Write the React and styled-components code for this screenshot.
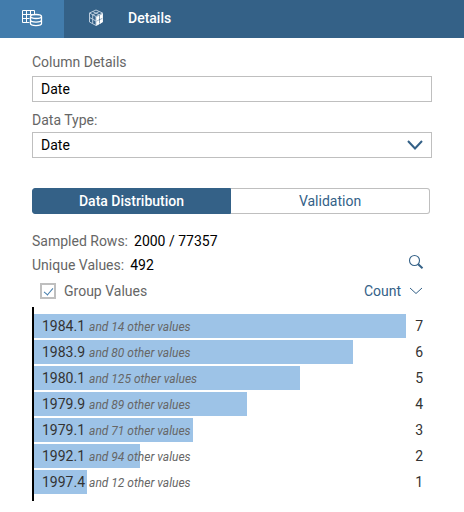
import React, { useState } from "react";
import styled, { createGlobalStyle } from "styled-components";

const GlobalStyle = createGlobalStyle`
  * { box-sizing: border-box; }
  body { margin: 0; background: #fff; }
  body, button, input, select {
    font-family: Roboto, "Liberation Sans", sans-serif;
    font-size: 14px;
    line-height: 24px;
  }
`;

const Header = styled.header`
  display: flex;
  align-items: center;
  height: 38px;
  background: #346187;
  color: #fff;
`;

const HeaderTab = styled.button`
  display: flex;
  align-items: center;
  justify-content: center;
  width: 64px;
  height: 38px;
  padding: 0 0 2px;
  border: 0;
  color: #fff;
  background: ${(p) => (p.$active ? "#427cac" : "transparent")};
`;

const Title = styled.h1`
  margin: 0;
  padding-bottom: 2px;
  font-size: 14px;
  font-weight: 500;
`;

const Main = styled.main`
  display: flex;
  flex-direction: column;
  padding: 12px 32px;
`;

const Field = styled.div`
  display: flex;
  flex-direction: column;
  gap: ${(p) => (p.$tight ? 0 : 2)}px;
  margin-bottom: ${(p) => (p.$tight ? 30 : 6)}px;
`;

const FieldLabel = styled.label`
  color: #666;
`;

const FieldInput = styled.input`
  width: 100%;
  height: 26px;
  padding: 0 8px;
  border: 1px solid #bfbfbf;
  border-radius: 0;
  color: #000;
  background: #fff;
`;

const SelectBox = styled.div`
  display: grid;
  align-items: center;
  & > * { grid-area: 1 / 1; }
  & > svg { justify-self: end; margin-right: ${(p) => p.$inset}px; pointer-events: none; }
`;

const FieldSelect = styled.select`
  appearance: none;
  width: 100%;
  height: 26px;
  padding: 0 32px 0 8px;
  border: 1px solid #bfbfbf;
  border-radius: 0;
  color: #000;
  background: #fff;
`;

const Segments = styled.div`
  display: grid;
  grid-template-columns: 1fr 1fr;
  margin: 0 2px 15px 0;
`;

const Segment = styled.button`
  height: 26px;
  padding: 0;
  border: 1px solid ${(p) => (p.$active ? "#346187" : "#bfbfbf")};
  color: ${(p) => (p.$active ? "#fff" : "#346187")};
  background: ${(p) => (p.$active ? "#346187" : "#fff")};
  font-weight: ${(p) => (p.$active ? 500 : 400)};
  &:first-child { border-radius: 3px 0 0 3px; }
  &:last-child { border-radius: 0 3px 3px 0; border-left: 0; }
`;

const StatRow = styled.div`
  display: flex;
  align-items: center;
  gap: 6px;
  height: 24px;
  color: #666;
`;

const StatValue = styled.span`
  color: #000;
`;

const SearchButton = styled.button`
  display: flex;
  margin-left: auto;
  padding: 0 8px 6px;
  border: 0;
  background: none;
  color: #346187;
`;

const GroupRow = styled.div`
  display: flex;
  align-items: center;
  justify-content: space-between;
  height: 28px;
  padding: 0 9px 0 8px;
`;

const CheckLabel = styled.label`
  display: flex;
  align-items: center;
  gap: 8px;
  color: #666;
`;

const Checkbox = styled.input`
  appearance: none;
  display: grid;
  place-items: center;
  width: 16px;
  height: 16px;
  margin: 0;
  border: 2px solid #bfbfbf;
  background: #fff;
  &:checked::after {
    content: "";
    width: 4px;
    height: 8px;
    margin-bottom: 2px;
    border: solid #427cac;
    border-width: 0 1px 1px 0;
    transform: rotate(40deg);
  }
`;

const MeasureSelect = styled.select`
  appearance: none;
  padding: 0 21px 0 0;
  border: 0;
  background: none;
  color: #346187;
`;

const Chart = styled.ul`
  display: flex;
  flex-direction: column;
  gap: 2px;
  margin: 2px 0 0;
  padding: 7px 0;
  border-left: 2px solid #000;
  list-style: none;
`;

const ChartRow = styled.li`
  display: grid;
  grid-template: 24px / 1fr 26px;
  align-items: center;
  color: #333;
`;

const Bar = styled.div`
  grid-area: 1 / 1;
  height: 24px;
  background: #9dc3e7;
`;

const BarLabel = styled.div`
  grid-area: 1 / 1;
  padding-left: 8px;
  white-space: nowrap;
`;

const Others = styled.em`
  margin-left: 4px;
  font-size: 12px;
  line-height: 16px;
  color: #666;
`;

const Count = styled.div`
  padding-right: 9px;
  text-align: right;
`;

const TableIcon = () => (
  <svg width="22" height="18" viewBox="0 0 22 18" fill="none" stroke="currentColor">
    <path d="M8.5 13.5H1.5V1.5H13.5V5M1.5 5.5H13.5M1.5 9.5H8.5M5.5 1.5V13.5M9.5 1.5V6" />
    <ellipse cx="15" cy="7.5" rx="5.5" ry="2" strokeWidth="1.3" />
    <path d="M9.5 7.5V14.5C9.5 17.2 20.5 17.2 20.5 14.5V7.5M9.5 11C9.5 13.7 20.5 13.7 20.5 11" strokeWidth="1.3" />
  </svg>
);

const CubeIcon = () => (
  <svg width="16" height="18" viewBox="0 0 16 18" fill="none" stroke="#b9cbdc">
    <path d="M8 1L14.5 4V13L8 16.5L1.5 13V4ZM1.5 4L8 7.5L14.5 4M4.7 2.5L11.3 5.8M11.3 2.5L4.7 5.8V14.7M1.5 8.5L8 12M8 7.5V16.5" />
    <path d="M8.5 8L11 6.8V10.6L8.5 11.8ZM12 6.2L14.5 5V8.8L12 10ZM8.5 12.6L11 11.4V15L8.5 16.3ZM12 11L14.5 9.7V13L12 14.4Z" fill="#fff" stroke="#fff" strokeWidth=".5" />
  </svg>
);

const Chevron = ({ width, height, weight }) => (
  <svg width={width} height={height} viewBox={`0 0 ${width} ${height}`} fill="none" stroke="#346187" strokeWidth={weight}>
    <path d={`M1 1L${width / 2} ${height - 1.5}L${width - 1} 1`} />
  </svg>
);

const SearchIcon = () => (
  <svg width="16" height="16" viewBox="0 0 16 16" fill="none" stroke="currentColor">
    <circle cx="6.5" cy="6.5" r="5" strokeWidth="1.1" />
    <path d="M10.2 10.2L14.5 14.2" strokeWidth="2" />
  </svg>
);

const rows = [
  ["1984.1", 14, 7],
  ["1983.9", 80, 6],
  ["1980.1", 125, 5],
  ["1979.9", 89, 4],
  ["1979.1", 71, 3],
  ["1992.1", 94, 2],
  ["1997.4", 12, 1],
];
const largest = Math.max(...rows.map((row) => row[2]));

export default function App() {
  const [view, setView] = useState("distribution");
  return (
    <>
      <GlobalStyle />
      <Header>
        <HeaderTab $active aria-label="Data"><TableIcon /></HeaderTab>
        <HeaderTab aria-label="Model"><CubeIcon /></HeaderTab>
        <Title>Details</Title>
      </Header>
      <Main>
        <Field>
          <FieldLabel htmlFor="column">Column Details</FieldLabel>
          <FieldInput id="column" defaultValue="Date" />
        </Field>
        <Field $tight>
          <FieldLabel htmlFor="type">Data Type:</FieldLabel>
          <SelectBox $inset={9}>
            <FieldSelect id="type"><option>Date</option></FieldSelect>
            <Chevron width={16} height={10} weight={2} />
          </SelectBox>
        </Field>
        <Segments>
          <Segment $active={view === "distribution"} onClick={() => setView("distribution")}>Data Distribution</Segment>
          <Segment $active={view === "validation"} onClick={() => setView("validation")}>Validation</Segment>
        </Segments>
        <StatRow>Sampled Rows: <StatValue>2000 / 77357</StatValue></StatRow>
        <StatRow>
          Unique Values: <StatValue>492</StatValue>
          <SearchButton aria-label="Search"><SearchIcon /></SearchButton>
        </StatRow>
        <GroupRow>
          <CheckLabel><Checkbox type="checkbox" defaultChecked />Group Values</CheckLabel>
          <SelectBox $inset={0}>
            <MeasureSelect aria-label="Measure"><option>Count</option></MeasureSelect>
            <Chevron width={14} height={8} weight={1} />
          </SelectBox>
        </GroupRow>
        <Chart>
          {rows.map(([value, others, count]) => (
            <ChartRow key={value}>
              <Bar style={{ width: `${(count / largest) * 100}%` }} />
              <BarLabel>{value}<Others>and {others} other values</Others></BarLabel>
              <Count>{count}</Count>
            </ChartRow>
          ))}
        </Chart>
      </Main>
    </>
  );
}
